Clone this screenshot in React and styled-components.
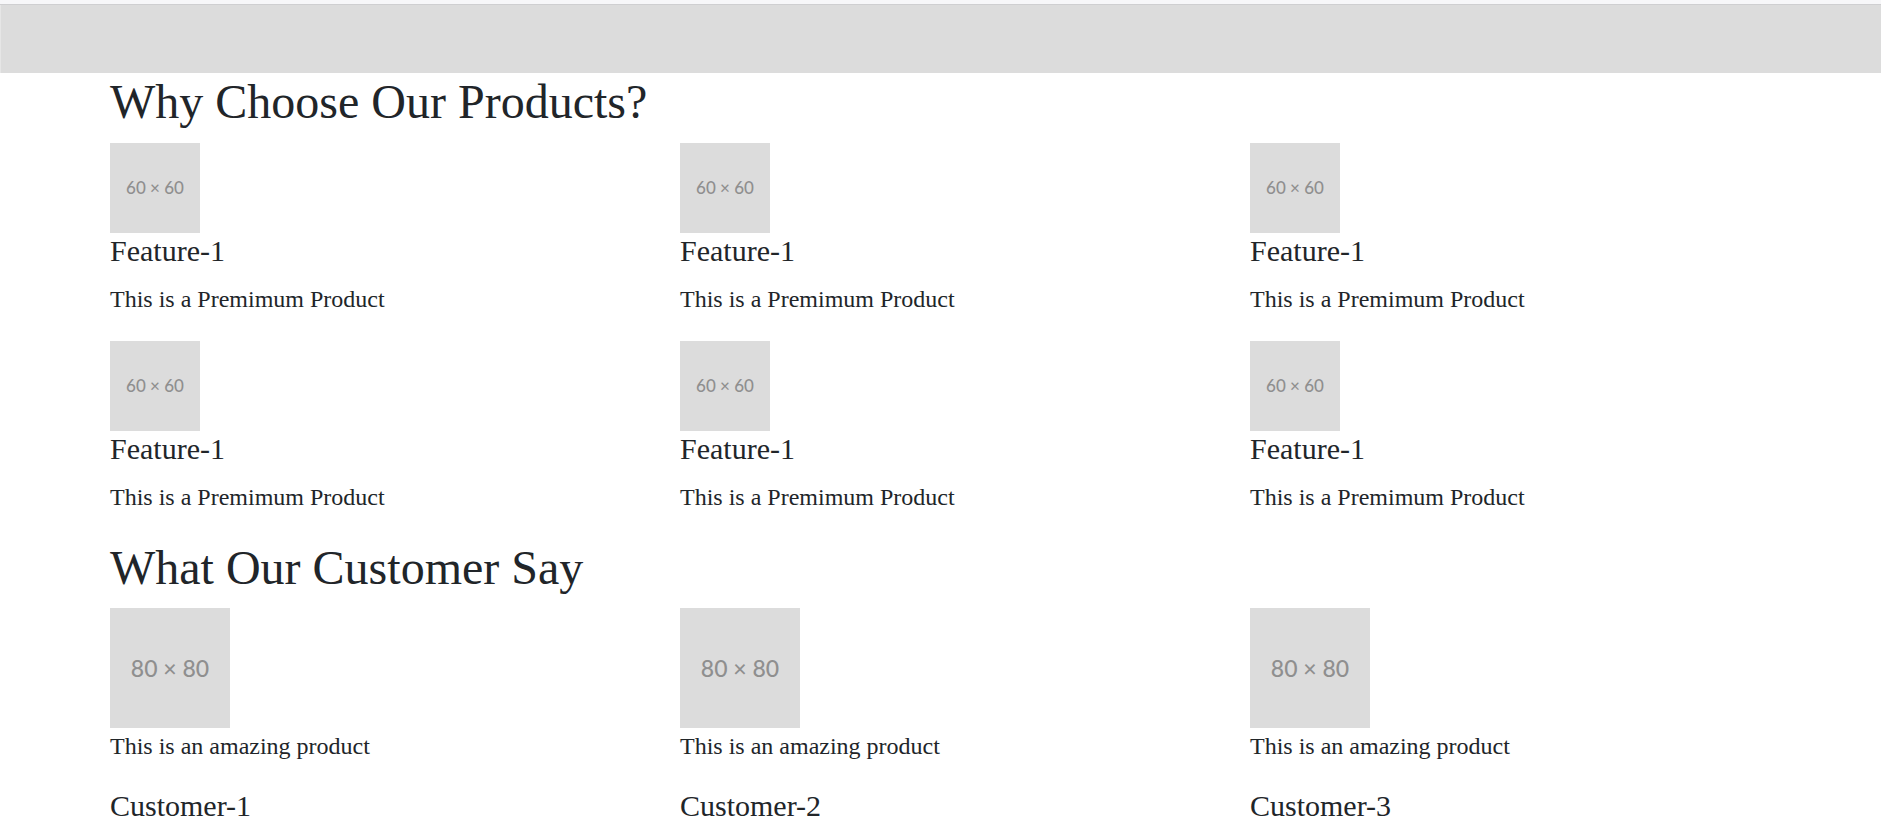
import React from "react";
import styled, { createGlobalStyle } from "styled-components";

const features = Array.from({ length: 6 }, () => ({
  title: "Feature-1",
  text: "This is a Premimum Product"
}));

const customers = [
  { name: "Customer-1", quote: "This is an amazing product" },
  { name: "Customer-2", quote: "This is an amazing product" },
  { name: "Customer-3", quote: "This is an amazing product" }
];

const Placeholder = ({ size, label }) => (
  <Thumb size={size} textSize={label === 80 ? 23 : 17}>
    {label} × {label}
  </Thumb>
);

export default function App() {
  return (
    <>
      <GlobalStyle />
      <TopStrip />
      <Banner />
      <Container>
        <Heading>Why Choose Our Products?</Heading>
        <Grid>
          {features.map((f, i) => (
            <Card key={i}>
              <Placeholder size={90} label={60} />
              <CardTitle>{f.title}</CardTitle>
              <CardText>{f.text}</CardText>
            </Card>
          ))}
        </Grid>

        <Heading>What Our Customer Say</Heading>
        <Grid>
          {customers.map(c => (
            <Card key={c.name}>
              <Placeholder size={120} label={80} />
              <CardText>{c.quote}</CardText>
              <CardTitle>{c.name}</CardTitle>
            </Card>
          ))}
        </Grid>
      </Container>
    </>
  );
}

const GlobalStyle = createGlobalStyle`
  * {
    box-sizing: border-box;
  }
  body {
    margin: 0;
    background: #fff;
    color: #212529;
    font-family: "Liberation Serif", "Times New Roman", serif;
    font-size: 24px;
    line-height: 1.5;
  }
`;

const TopStrip = styled.div`
  height: 5px;
  background: #f7f7f9;
  border-bottom: 1px solid #cfcfd1;
`;

const Banner = styled.div`
  height: 68px;
  background: #dcdcdc;
  border-left: 1px solid #e6e6e6;
`;

const Container = styled.main`
  padding-left: 110px;
`;

const Heading = styled.h2`
  margin: 0 0 12px;
  font-size: 48px;
  font-weight: 400;
  line-height: 1.2;
`;

const Grid = styled.div`
  display: grid;
  grid-template-columns: repeat(3, 570px);
`;

const Card = styled.div`
  display: flex;
  flex-direction: column;
  align-items: flex-start;
`;

const Thumb = styled.div`
  width: ${p => p.size}px;
  height: ${p => p.size}px;
  background: #dcdcdc;
  color: #8f8f8f;
  display: flex;
  align-items: center;
  justify-content: center;
  font-family: Lato, "Open Sans", sans-serif;
  font-size: ${p => p.textSize}px;
  font-weight: 500;
  white-space: nowrap;
`;

const CardTitle = styled.h5`
  margin: 0 0 12px;
  font-size: 30px;
  font-weight: 400;
  line-height: 1.2;
`;

const CardText = styled.p`
  margin: 0 0 24px;
`;
